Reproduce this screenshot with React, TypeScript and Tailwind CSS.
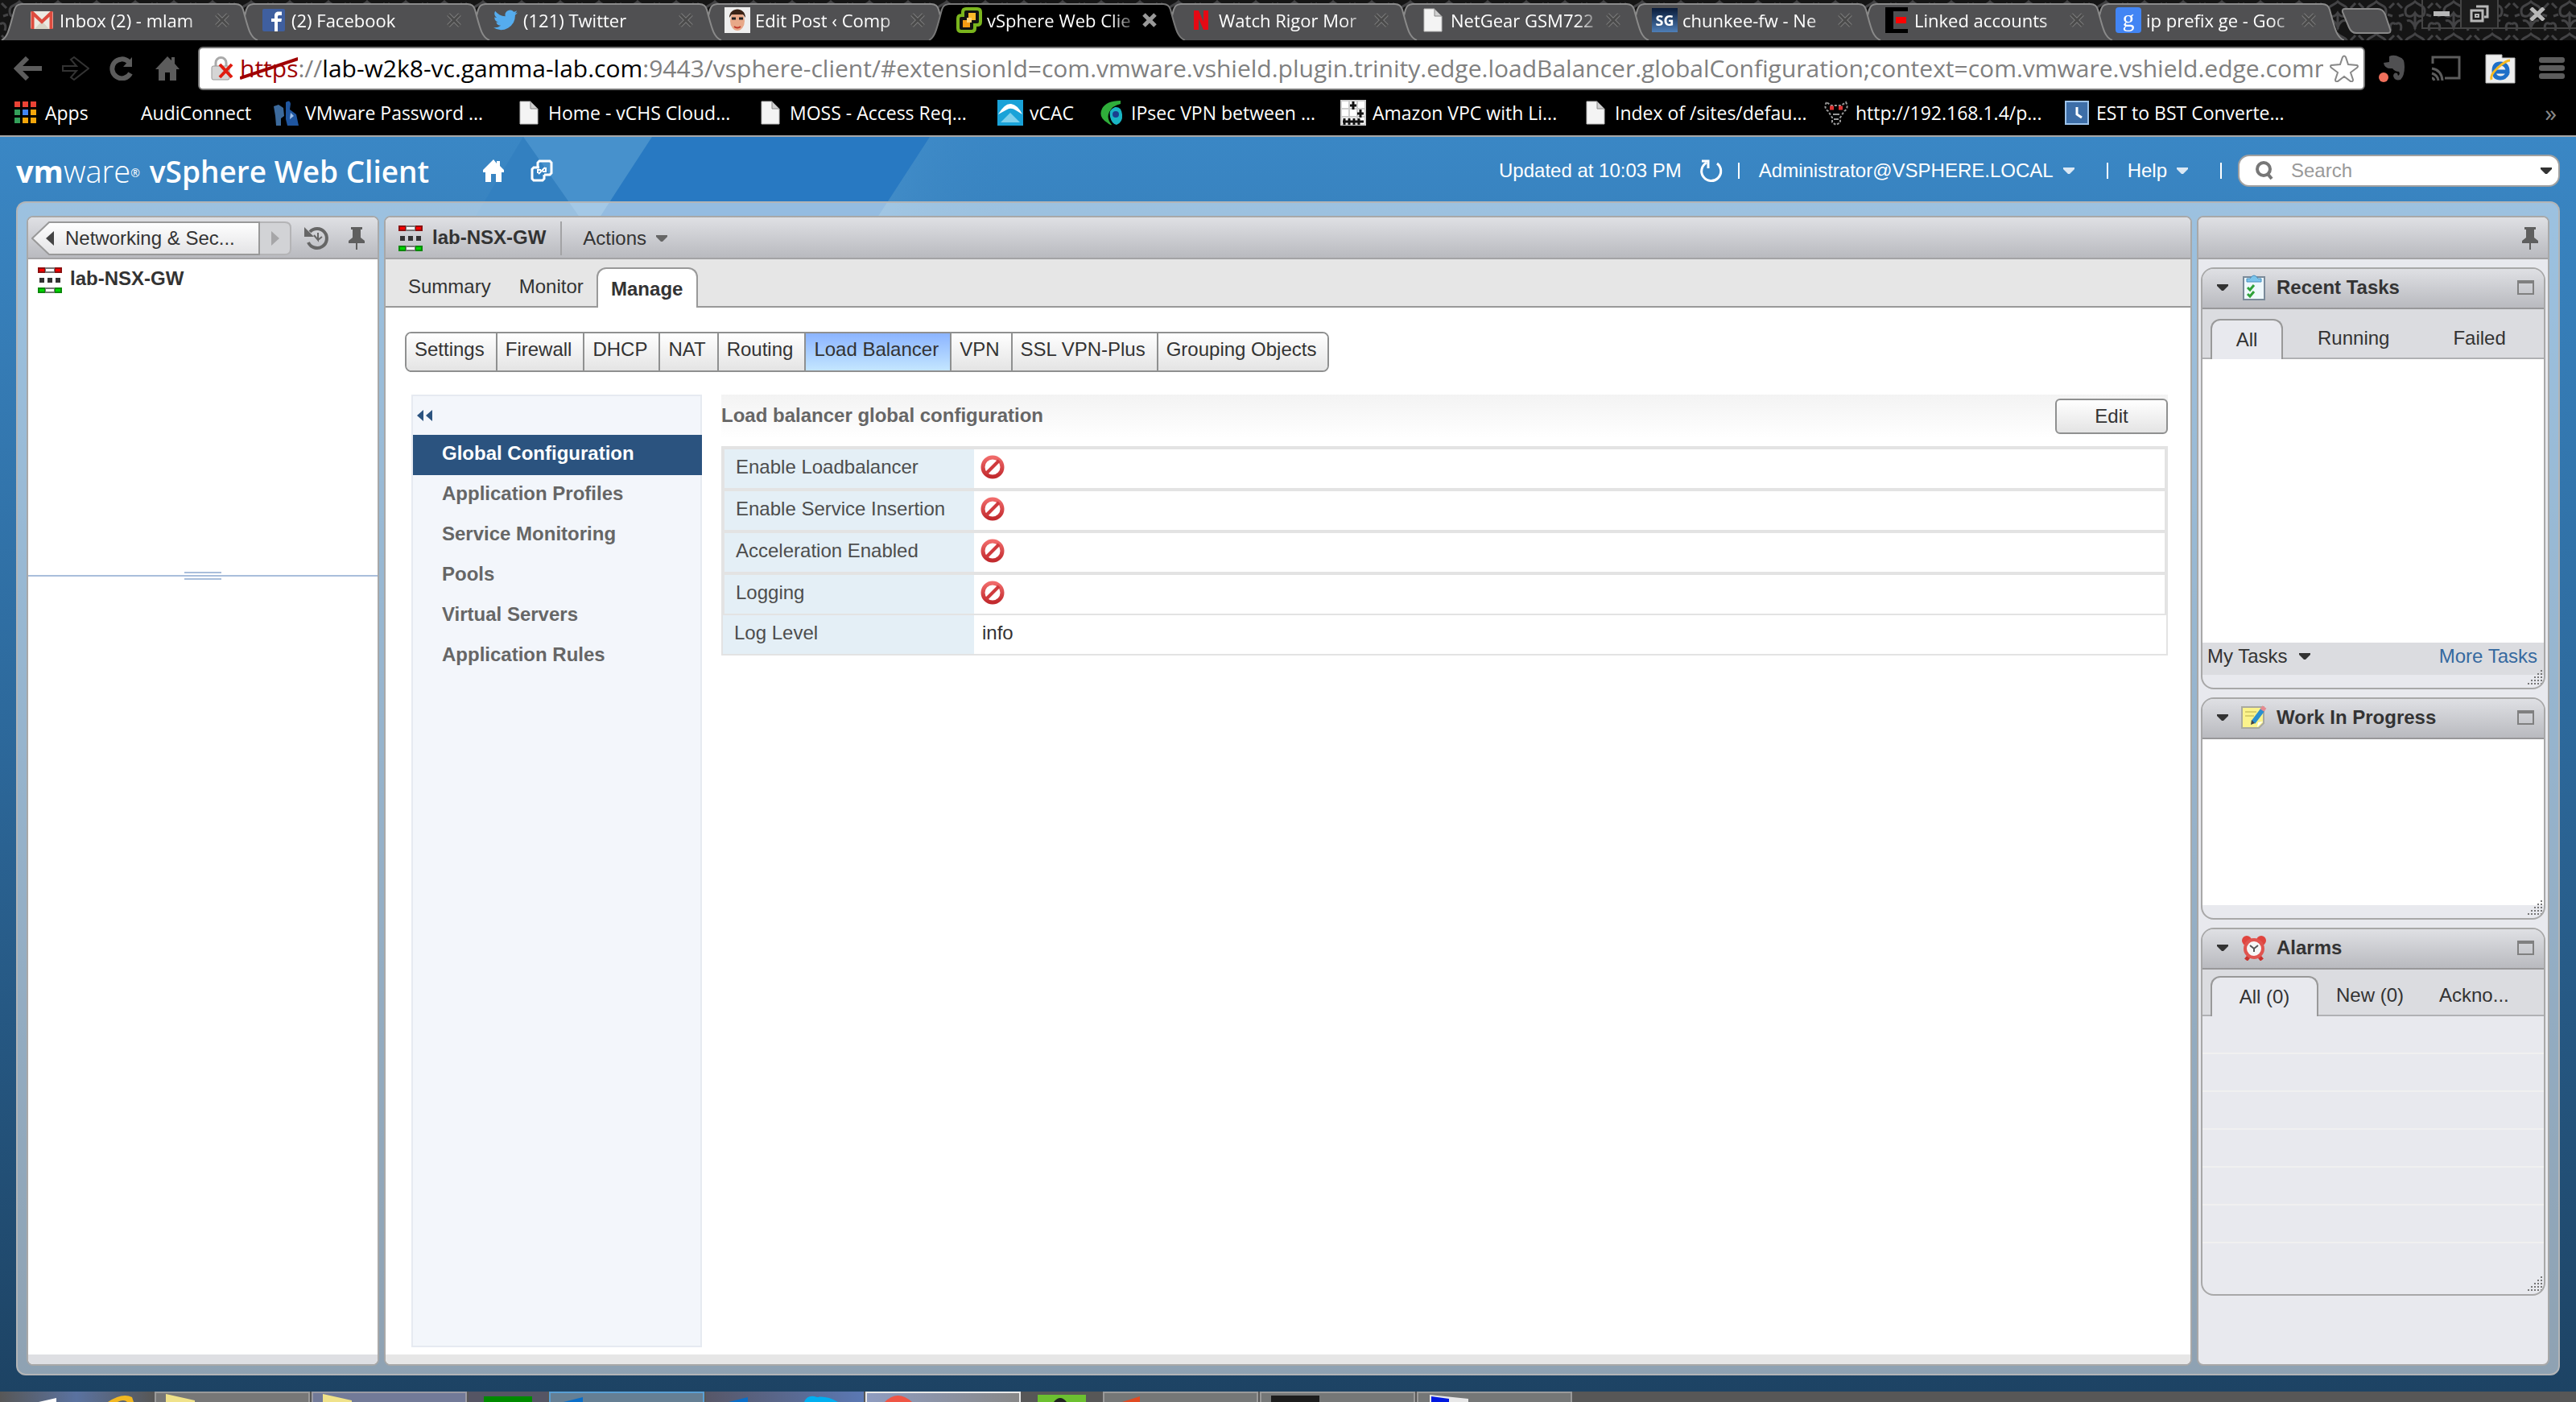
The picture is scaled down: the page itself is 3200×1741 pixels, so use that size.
import React, { useState } from 'react';

/* ---------- small shared icons ---------- */

const Caret: React.FC<{ className?: string }> = ({ className = 'fill-[#333]' }) => (
  <svg width="14" height="8" viewBox="0 0 14 8" className={className} aria-hidden="true">
    <path d="M0 0h14v2L8 8H6L0 2z" />
  </svg>
);

const Pin = () => (
  <svg width="20" height="28" viewBox="0 0 20 28" className="fill-[#5f5f5f]" aria-hidden="true">
    <path d="M3 0h14v3h-2v10l5 4v3H0v-3l5-4V3H3z" />
    <path d="M9 20h2v8H9z" />
  </svg>
);

const EdgeIcon = () => (
  <svg width="30" height="32" viewBox="0 0 30 32" className="shrink-0" aria-hidden="true">
    <rect width="30" height="7" fill="#777" />
    <rect width="9" height="7" fill="#8c1010" />
    <rect x="21" width="9" height="7" fill="#8c1010" />
    <rect x="2" y="2" width="6" height="3" fill="#f00" />
    <rect x="22" y="2" width="6" height="3" fill="#f00" />
    <rect x="10" y="2" width="10" height="3" fill="#fff" />
    <rect x="2" y="13" width="6" height="6" fill="#333" />
    <rect x="12" y="13" width="6" height="6" fill="#333" />
    <rect x="22" y="13" width="6" height="6" fill="#333" />
    <rect y="25" width="30" height="7" fill="#777" />
    <rect y="25" width="9" height="7" fill="#0a8a0a" />
    <rect x="21" y="25" width="9" height="7" fill="#0a8a0a" />
    <rect x="2" y="27" width="6" height="3" fill="#00d800" />
    <rect x="22" y="27" width="6" height="3" fill="#00d800" />
    <rect x="10" y="27" width="10" height="3" fill="#fff" />
  </svg>
);

const Disabled = () => (
  <svg width="30" height="30" viewBox="0 0 30 30" role="img" aria-label="Disabled">
    <defs>
      <linearGradient id="ban" x1="0" y1="0" x2="0" y2="1">
        <stop offset="0" stopColor="#f06a6a" />
        <stop offset="1" stopColor="#c22a2e" />
      </linearGradient>
    </defs>
    <circle cx="15" cy="15" r="12" fill="#fff" stroke="url(#ban)" strokeWidth="5" />
    <path d="M7 23L23 7" stroke="#cf3a3d" strokeWidth="4" />
  </svg>
);

const PageIcon = () => (
  <svg width="24" height="30" viewBox="0 0 24 30" aria-hidden="true">
    <path d="M1 1h13l9 9v19H1z" fill="#f4f4f4" stroke="#bbb" />
    <path d="M14 1v9h9z" fill="#d0d0d0" stroke="#888" />
  </svg>
);

const Grip = () => (
  <svg width="20" height="20" viewBox="0 0 20 20" className="absolute right-0.5 bottom-0.5 fill-[#777]" aria-hidden="true">
    {[0, 1, 2, 3, 4].map((r) =>
      Array.from({ length: r + 1 }, (_, c) => (
        <rect key={`${r}-${c}`} x={18 - c * 4} y={r * 4} width="2" height="2" />
      ))
    )}
  </svg>
);

/* ---------- browser chrome ---------- */

const GmailIcon = () => (
  <svg width="28" height="22" viewBox="0 0 28 22" aria-hidden="true">
    <rect width="28" height="22" rx="2" fill="#eceae2" />
    <path d="M5 22l9-10 9 10z" fill="#d8d4c6" />
    <path d="M2.500 22V2L14 13 25.500 2v20" fill="none" stroke="#dd4b3e" strokeWidth="4" />
  </svg>
);
const FacebookIcon = () => (
  <svg width="28" height="28" viewBox="0 0 28 28" aria-hidden="true">
    <rect width="28" height="28" rx="2" fill="#3f5f9f" />
    <path d="M15 28V16h-4v-4h4V9c0-4 2-5.500 5-5.500h4V8h-3c-1.500 0-2 .5-2 2v2h5l-.6 4H19v12z" fill="#fff" />
  </svg>
);
const TwitterIcon = () => (
  <svg width="30" height="26" viewBox="0 0 24 20" aria-hidden="true">
    <path
      fill="#55acee"
      d="M24 2.400a10 10 0 0 1-2.800.8A5 5 0 0 0 23.300.5a10 10 0 0 1-3.100 1.200 4.900 4.900 0 0 0-8.400 4.500A14 14 0 0 1 1.700 1a4.900 4.900 0 0 0 1.500 6.600A5 5 0 0 1 1 7a4.900 4.900 0 0 0 4 4.900 5 5 0 0 1-2.300 0 4.900 4.900 0 0 0 4.600 3.500A10 10 0 0 1 0 17.400 14 14 0 0 0 21.500 5a10 10 0 0 0 2.500-2.600z"
    />
  </svg>
);
const FaceIcon = () => (
  <svg width="32" height="32" viewBox="0 0 32 32" aria-hidden="true">
    <rect width="32" height="32" fill="#eee" />
    <ellipse cx="16" cy="17" rx="9" ry="12" fill="#e8a888" />
    <path d="M6 13c0-14 20-14 20 0l-3-4H9z" fill="#3a2417" />
    <path d="M9 14h5M18 14h5" stroke="#222" strokeWidth="3" />
    <path d="M12 24q4 3 8 0" stroke="#c0392b" strokeWidth="2" fill="none" />
  </svg>
);
const VsphereIcon = () => (
  <svg width="32" height="32" viewBox="0 0 32 32" aria-hidden="true">
    <path d="M12 2h14q4 0 4 4v12q0 4-4 4h-3v4q0 4-4 4H6q-4 0-4-4V14q0-4 4-4h2V6q0-4 4-4z" fill="#111" stroke="#7ab51d" strokeWidth="4" />
    <rect x="15" y="7" width="9" height="9" fill="#fbb829" />
    <rect x="8" y="16" width="9" height="9" fill="#f59b14" />
    <rect x="13" y="13" width="6" height="6" fill="#fbd27a" />
  </svg>
);
const NetflixIcon = () => (
  <svg width="20" height="24" viewBox="0 0 20 24" aria-hidden="true">
    <path d="M1 0h6l6 14V0h6v24h-6L7 10v14H1z" fill="#e50914" />
  </svg>
);
const SgIcon = () => (
  <span className="flex h-[30px] w-8 items-center justify-center bg-linear-to-b from-[#0a1c3a] to-[#4f7fb8] text-lg font-bold text-white">SG</span>
);
const LinkedIcon = () => (
  <svg width="28" height="32" viewBox="0 0 28 32" aria-hidden="true">
    <path d="M0 0h28v5H10v22h18v5H0z" fill="#000" />
    <rect x="13" y="12" width="13" height="8" fill="#f00" />
  </svg>
);
const GoogleIcon = () => (
  <span className="flex h-8 w-8 items-center justify-center rounded bg-[#4285f4] pb-1 font-['Liberation_Serif',serif] text-3xl leading-none text-white">g</span>
);

const browserTabs = [
  { title: 'Inbox (2) - mlam', icon: GmailIcon },
  { title: '(2) Facebook', icon: FacebookIcon },
  { title: '(121) Twitter', icon: TwitterIcon },
  { title: 'Edit Post ‹ Comp', icon: FaceIcon },
  { title: 'vSphere Web Clie', icon: VsphereIcon, active: true },
  { title: 'Watch Rigor Mor', icon: NetflixIcon },
  { title: 'NetGear GSM722', icon: PageIcon },
  { title: 'chunkee-fw - Ne', icon: SgIcon },
  { title: 'Linked accounts', icon: LinkedIcon },
  { title: 'ip prefix ge - Goc', icon: GoogleIcon },
];

const TabStrip = () => (
  <div className="relative flex h-[50px] overflow-hidden bg-[#151515]">
    <svg className="absolute inset-0 h-full w-full" aria-hidden="true">
      <defs>
        <pattern id="damask" width="48" height="40" patternUnits="userSpaceOnUse">
          <g fill="none" stroke="#434345" strokeWidth="3">
            <path d="M24 2c-6 6-12 4-12 12s8 8 12 2c4 6 12 6 12-2S30 8 24 2z" />
            <path d="M24 18v18M14 26c4-2 8 2 10 8 2-6 6-10 10-8M0 30c6-4 8 2 6 8M48 30c-6-4-8 2-6 8" />
            <path d="M2 4l6 6M46 4l-6 6M4 20l6-2M44 20l-6-2" />
          </g>
        </pattern>
      </defs>
      <rect width="100%" height="100%" fill="url(#damask)" />
    </svg>
    {browserTabs.map(({ title, icon: Icon, active }, i) => (
      <div key={title} className="relative flex w-72 shrink-0 items-center pl-9" style={{ zIndex: active ? 20 : 10 - i }}>
        <svg width="322" height="50" viewBox="0 0 322 50" className="absolute top-0 left-0" aria-hidden="true">
          <path
            d="M2 50C10 46 12 34 18 12Q20 5 27 5H293Q300 5 302 12C308 34 310 46 320 50"
            fill={active ? '#000' : '#505052'}
            stroke={active ? '#777' : '#8a8a8a'}
            strokeWidth="2"
          />
        </svg>
        <a href="#" className="relative flex w-[228px] items-center gap-1.5 mask-r-from-85% text-[22px] leading-8 whitespace-nowrap text-white">
          <span className="flex w-8 shrink-0 justify-center">
            <Icon />
          </span>
          {title}
        </a>
        <button aria-label={`Close ${title}`} className="relative ml-0.5">
          <svg width="20" height="18" viewBox="0 0 20 18" fill="none" aria-hidden="true">
            <path d="M3 2l14 14M17 2L3 16" stroke={active ? '#999' : '#7c7c7c'} strokeWidth="5" />
            {!active && <path d="M3 2l14 14M17 2L3 16" stroke="#4a4a4a" strokeWidth="3" />}
          </svg>
        </button>
      </div>
    ))}
    <button aria-label="New tab" className="relative ml-7 self-start pt-2.5">
      <svg width="64" height="32" viewBox="0 0 64 32" aria-hidden="true">
        <path d="M2 5q-1-4 3-4h41q6 0 9 7l6 18q2 5-3 5H19q-6 0-9-7z" fill="#505052" stroke="#888" strokeWidth="2" />
      </svg>
    </button>
    <div className="relative ml-auto flex h-9 w-[192px] items-center border-b-2 border-[#444] text-[#c8c8c8]">
      <button aria-label="Minimize" className="flex h-full w-12 items-center justify-center border-l-2 border-[#444]">
        <span className="h-1.5 w-5 bg-[#b8b8b8]" />
      </button>
      <button aria-label="Restore" className="flex h-full w-12 items-center justify-center border-x-2 border-[#444] bg-[#1c1c1c]">
        <svg width="24" height="22" viewBox="0 0 24 22" fill="none" stroke="#b8b8b8" strokeWidth="3" aria-hidden="true">
          <path d="M8 2h14v13h-4" />
          <rect x="2" y="7" width="14" height="13" />
          <rect x="7" y="12" width="4" height="3" strokeWidth="2" />
        </svg>
      </button>
      <button aria-label="Close window" className="flex h-full flex-1 items-center justify-center">
        <svg width="20" height="17" viewBox="0 0 20 17" fill="none" stroke="#b8b8b8" strokeWidth="5" aria-hidden="true">
          <path d="M2 1l16 15M18 1L2 16" />
        </svg>
      </button>
    </div>
  </div>
);

const AddressRow = () => (
  <div className="flex h-[66px] items-center bg-black pt-1 pr-3.5 pl-4">
    <div className="flex w-[230px] items-center gap-[25px]">
      <button aria-label="Back">
        <svg width="36" height="30" viewBox="0 0 36 30" fill="none" stroke="#5c5c5c" strokeWidth="6" aria-hidden="true">
          <path d="M5 15h31M18 2L5 15l13 13" />
        </svg>
      </button>
      <button aria-label="Forward">
        <svg width="34" height="30" viewBox="0 0 34 30" fill="none" stroke="#333" strokeWidth="2" aria-hidden="true">
          <path d="M1 12h17l-7-8 4-3 18 14-18 14-4-3 7-8H1z" />
        </svg>
      </button>
      <button aria-label="Reload">
        <svg width="32" height="30" viewBox="0 0 32 30" fill="none" stroke="#5c5c5c" strokeWidth="6" aria-hidden="true">
          <path d="M26 21A12 12 0 1 1 24 7" />
          <path d="M28 1v12H17z" fill="#5c5c5c" stroke="none" />
        </svg>
      </button>
      <button aria-label="Home">
        <svg width="30" height="30" viewBox="0 0 30 30" fill="#5c5c5c" aria-hidden="true">
          <path d="M15 0L0 16h4v14h8V20h6v10h8V16h4l-6-7V1h-4v4z" />
        </svg>
      </button>
    </div>
    <div className="flex h-[54px] min-w-0 flex-1 items-center rounded-md border-2 border-[#777] bg-white pr-1.5 pl-3.5 text-[30px] leading-10">
      <svg width="28" height="32" viewBox="0 0 28 32" className="shrink-0" aria-hidden="true">
        <path d="M6 14V9a6 6 0 0 1 13 0v5" fill="none" stroke="#aaa" strokeWidth="3" />
        <rect x="1" y="13" width="22" height="17" rx="2" fill="#d5d5d5" stroke="#999" />
        <path d="M11 11l15 16M26 11L11 27" stroke="#e01b0f" strokeWidth="4" />
      </svg>
      <label htmlFor="address" className="flex shrink-0 pl-2 text-[#808080]">
        <span className="relative text-[#a00000]">
          https
          <svg viewBox="0 0 70 28" preserveAspectRatio="none" className="absolute inset-x-0 top-1.5 h-7 w-full" aria-hidden="true">
            <path d="M0 26L70 2" stroke="#a00000" strokeWidth="4" />
          </svg>
        </span>
        ://<span className="text-black">lab-w2k8-vc.gamma-lab.com</span>
      </label>
      <input
        id="address"
        readOnly
        className="min-w-0 flex-1 text-[#808080] outline-none"
        value=":9443/vsphere-client/#extensionId=com.vmware.vshield.plugin.trinity.edge.loadBalancer.globalConfiguration;context=com.vmware.vshield.edge.comm"
      />
      <button aria-label="Bookmark this page" className="pl-2">
        <svg width="36" height="34" viewBox="0 0 36 34" fill="#fff" stroke="#888" strokeWidth="2" aria-hidden="true">
          <path d="M16 3q2-3 4 0l3 9 11 1q2 1 0 3l-8 6 3 9q0 3-3 2l-8-6-8 6q-3 1-3-2l3-9-8-6q-2-2 0-3l11-1z" />
        </svg>
      </button>
    </div>
    <div className="flex w-[248px] items-center justify-between pl-4">
      <svg width="36" height="36" viewBox="0 0 36 36" aria-hidden="true">
        <path d="M14 3q6-3 13 1 6 1 6 12t-5 16q-8 2-9-5 1-5 5-3l1 3q3-2 1-5-5 0-8-4-10 1-11-7l7-1z" fill="#505052" />
        <circle cx="7" cy="29" r="6" fill="#f0705c" />
      </svg>
      <svg width="38" height="32" viewBox="0 0 38 32" fill="none" stroke="#5c5c5c" strokeWidth="3" aria-hidden="true">
        <path d="M3 10V2h33v26H18M2 16q12 2 13 15M2 22q7 2 8 9M2 28q2 0 3 3" />
      </svg>
      <svg width="38" height="38" viewBox="0 0 38 38" aria-hidden="true">
        <path d="M1 2h20v4h16v31H1z" fill="#eee" stroke="#bbb" />
        <path d="M28 25q-3 6-9 6-8 0-8-9t8-9q9 0 9 10H13" fill="none" stroke="#1e6fc8" strokeWidth="5" />
        <path d="M8 33q-2-6 8-15T31 9" fill="none" stroke="#f5b921" strokeWidth="3" />
      </svg>
      <button aria-label="Menu">
        <svg width="32" height="30" viewBox="0 0 32 30" fill="#5c5c5c" aria-hidden="true">
          <rect y="1" width="32" height="7" rx="3" />
          <rect y="11" width="32" height="7" rx="3" />
          <rect y="21" width="32" height="7" rx="3" />
        </svg>
      </button>
    </div>
  </div>
);

const AppsIcon = () => (
  <svg width="28" height="28" viewBox="0 0 28 28" aria-hidden="true">
    {['#ea4335', '#ea4335', '#ea4335', '#34a05a', '#4285f4', '#f4a60b', '#34a05a', '#f4a60b', '#f4a60b'].map((c, i) => (
      <rect key={i} x={(i % 3) * 10} y={Math.floor(i / 3) * 10} width="7" height="7" fill={c} />
    ))}
  </svg>
);
const VmwPeopleIcon = () => (
  <svg width="32" height="32" viewBox="0 0 32 32" fill="#1f56a0" aria-hidden="true">
    <path d="M16 3q5-4 6 2l-1 7 8 6 3 14H18l-2-8z" />
    <path d="M1 8l6-2 6 4 1 10-4 3v9H4l-1-12z" fill="#3c6a9c" />
    <path d="M22 16l4 4-5 4z" fill="#9fc0e8" />
  </svg>
);
const VcacIcon = () => (
  <svg width="32" height="32" viewBox="0 0 32 32" aria-hidden="true">
    <rect width="32" height="32" fill="#19a2d8" />
    <path d="M1 18Q9 4 17 5t14 13l-8-5q-6-4-11-1z" fill="#fff" />
    <path d="M4 28l12-12 12 12z" fill="#7fd0ec" />
  </svg>
);
const SwirlIcon = () => (
  <svg width="30" height="32" viewBox="0 0 30 32" aria-hidden="true">
    <path d="M26 1Q8 1 3 11T9 28q5 4 6 3-7-8-3-16T26 5z" fill="#2fae3a" />
    <path d="M19 9q-8 3-6 12t8 10q8-3 7-13T19 9z" fill="#19b5c4" />
    <circle cx="20" cy="18" r="4" fill="#1a3f8f" />
  </svg>
);
const SkullIcon = () => (
  <svg width="32" height="32" viewBox="0 0 32 32" aria-hidden="true">
    <rect width="32" height="32" fill="#ccc" />
    {[0, 1, 2].map((r) => [0, 1, 2].map((c) => <rect key={`${r}${c}`} x={2 + c * 10} y={2 + r * 10} width="8" height="8" fill="#fff" />))}
    <path d="M16 2v10M12 7h8M25 12v10M21 17h8M3 27h26M5 23v8M11 23v8M17 23v8M23 23v8" stroke="#111" strokeWidth="3" />
  </svg>
);
const DevilIcon = () => (
  <svg width="32" height="32" viewBox="0 0 32 32" fill="none" stroke="#999" strokeWidth="2" aria-hidden="true">
    <path d="M4 3Q0 10 6 14l5 8v6l5 3 5-3v-6l5-8q6-4 2-11l-6 4H10z" strokeDasharray="3 2" />
    <path d="M8 10h5M19 10h5" stroke="#d33" strokeWidth="5" />
    <path d="M12 18h8M13 24h6" />
  </svg>
);
const ClockIcon = () => (
  <svg width="30" height="32" viewBox="0 0 30 32" aria-hidden="true">
    <rect x="1" y="2" width="28" height="28" fill="#3d6ea8" stroke="#9cc3ea" strokeWidth="2" />
    <path d="M15 9v9l6 4" fill="none" stroke="#fff" strokeWidth="3" />
  </svg>
);

const bookmarks = [
  { title: 'Apps', icon: AppsIcon, width: 'w-[119px]' },
  { title: 'AudiConnect', icon: null, width: 'w-[204px]' },
  { title: 'VMware Password ...', icon: VmwPeopleIcon, width: 'w-[302px]' },
  { title: 'Home - vCHS Cloud...', icon: PageIcon, width: 'w-[300px]' },
  { title: 'MOSS - Access Req...', icon: PageIcon, width: 'w-[298px]' },
  { title: 'vCAC', icon: VcacIcon, width: 'w-[126px]' },
  { title: 'IPsec VPN between ...', icon: SwirlIcon, width: 'w-[300px]' },
  { title: 'Amazon VPC with Li...', icon: SkullIcon, width: 'w-[301px]' },
  { title: 'Index of /sites/defau...', icon: PageIcon, width: 'w-[299px]' },
  { title: 'http://192.168.1.4/p...', icon: DevilIcon, width: 'w-[299px]' },
  { title: 'EST to BST Converte...', icon: ClockIcon, width: 'w-[300px]' },
];

const BookmarksBar = () => (
  <nav className="flex h-[54px] items-center border-b-2 border-[#a8a8a8] bg-black pb-1 pl-4 text-[23px] leading-8 whitespace-nowrap text-white">
    {bookmarks.map(({ title, icon: Icon, width }) => (
      <a key={title} href="#" className={`flex shrink-0 items-center gap-2 ${width}`}>
        <span className="flex w-8 shrink-0 justify-center">{Icon && <Icon />}</span>
        {title}
      </a>
    ))}
    <button aria-label="More bookmarks" className="mr-6 ml-auto text-3xl leading-8 text-[#888]">»</button>
  </nav>
);

/* ---------- vSphere header ---------- */

const Separator = () => <span className="h-5 w-0.5 bg-white" />;

const AppHeader = () => (
  <header className="relative flex h-20 items-center pt-1 pr-5 pl-5 text-2xl leading-7 text-white">
    <svg width="1500" height="100" viewBox="0 0 1500 100" className="absolute top-0 left-0" aria-hidden="true">
      <defs>
        <linearGradient id="beam" x1="0" x2="1">
          <stop offset="0" stopColor="#4b95cf" stopOpacity=".5" />
          <stop offset="1" stopColor="#3a84c2" stopOpacity="0" />
        </linearGradient>
      </defs>
      <path d="M650 0h160L745 100h-25z" fill="#4791cc" />
      <path d="M650 0L590 100h130z" fill="#3380c0" />
      <path d="M810 0h345l-65 100H745z" fill="#2879c2" />
      <path d="M1155 0h110v100h-175z" fill="url(#beam)" />
    </svg>
    <h1 className="relative flex items-baseline gap-3 font-['Open_Sans',sans-serif] whitespace-nowrap">
      <span className="text-[38px] leading-10">
        <b>vm</b>
        <span className="font-light">ware</span>
        <sup className="text-sm">®</sup>
      </span>
      <span className="text-[37px] leading-10 font-semibold">vSphere Web Client</span>
    </h1>
    <div className="relative ml-[66px] flex items-center gap-8">
      <button aria-label="Home">
        <svg width="28" height="28" viewBox="0 0 28 28" fill="#fff" aria-hidden="true">
          <path d="M14 0L1 13v3h3v12h7V18h6v10h7V16h3v-3l-5-5V2h-4v3z" />
        </svg>
      </button>
      <button aria-label="Open windows">
        <svg width="28" height="28" viewBox="0 0 28 28" fill="none" stroke="#fff" strokeWidth="3" aria-hidden="true">
          <path d="M17 19h7l2-2V4l-2-2H11L9 4v6" />
          <path d="M11 10H4l-2 2v12l2 2h11l2-2v-5" />
          <path d="M9 17v-4h4M19 10v5h-4M10 18l8-8" strokeWidth="2" />
        </svg>
      </button>
    </div>
    <div className="relative ml-auto flex items-center whitespace-nowrap">
      <span>Updated at 10:03 PM</span>
      <button aria-label="Refresh" className="mr-[18px] ml-[22px]">
        <svg width="30" height="30" viewBox="0 0 30 30" fill="none" stroke="#fff" strokeWidth="3" aria-hidden="true">
          <path d="M9 5a12 12 0 1 0 13 1" />
          <path d="M3 3h8v9" />
        </svg>
      </button>
      <Separator />
      <button className="ml-6 flex items-center gap-3">
        Administrator@VSPHERE.LOCAL
        <Caret className="fill-[#dbe8f4]" />
      </button>
      <span className="ml-10 flex">
        <Separator />
      </span>
      <button className="ml-6 flex items-center gap-3">
        Help
        <Caret className="fill-[#dbe8f4]" />
      </button>
      <span className="mr-5 ml-10 flex">
        <Separator />
      </span>
      <label className="flex h-10 w-[400px] items-center rounded-[14px] border-2 border-[#a0a0a0] bg-white pr-2 pl-5">
        <svg width="22" height="24" viewBox="0 0 22 24" fill="none" stroke="#777" strokeWidth="4" aria-hidden="true">
          <circle cx="10" cy="10" r="8" />
          <path d="M15 16l5 6" />
        </svg>
        <input type="search" aria-label="Search" placeholder="Search" className="ml-[22px] min-w-0 flex-1 text-[#333] outline-none placeholder:text-[#999]" />
        <Caret />
      </label>
    </div>
  </header>
);

/* ---------- panels ---------- */

const panel = 'flex flex-col overflow-hidden rounded-lg border-2 border-[#a8a8a8]';
const panelHeader = 'flex h-[52px] shrink-0 items-center border-b-2 border-[#a3a3a5] bg-linear-to-b from-[#dfe0e4] to-[#b9babf] pt-0.5';

const Navigator = () => (
  <aside className={`${panel} w-[438px] shrink-0 bg-white`}>
    <div className={`${panelHeader} pl-1`}>
      <div className="relative flex h-[42px] w-[324px] items-center">
        <svg width="324" height="42" viewBox="0 0 324 42" className="absolute inset-0" aria-hidden="true">
          <defs>
            <linearGradient id="crumb" x1="0" y1="0" x2="0" y2="1">
              <stop offset="0" stopColor="#fff" />
              <stop offset="1" stopColor="#e3e3e5" />
            </linearGradient>
          </defs>
          <path d="M283 1h32q7 0 7 7v26q0 7-7 7h-32z" fill="#d2d3d6" stroke="#b4b4b6" strokeWidth="2" />
          <path d="M283 1H22L1 21l21 20h261z" fill="url(#crumb)" stroke="#999" strokeWidth="2" />
          <path d="M28 12v18l-10-9z" fill="#444" />
          <path d="M298 12v18l10-9z" fill="#a6a6a8" />
        </svg>
        <button className="relative flex-1 pl-[42px] text-left">Networking &amp; Sec...</button>
        <button aria-label="Forward" className="relative h-full w-10" />
      </div>
      <button aria-label="History" className="ml-3.5">
        <svg width="34" height="32" viewBox="0 0 34 32" fill="none" stroke="#666" strokeWidth="4" aria-hidden="true">
          <path d="M8 8a12 12 0 1 1-2 13" />
          <path d="M1 2v12h12z" fill="#666" stroke="none" />
          <path d="M13 12l5 6V9M18 18l5-4" strokeWidth="2" />
        </svg>
      </button>
      <button aria-label="Pin navigator" className="ml-[22px]">
        <Pin />
      </button>
    </div>
    <div className="flex h-[388px] items-start gap-2.5 pt-2.5 pl-3">
      <EdgeIcon />
      <a href="#" className="font-bold">lab-NSX-GW</a>
    </div>
    <div className="flex h-2.5 flex-col items-center justify-between">
      <span className="h-0.5 w-[46px] bg-[#a9bedb]" />
      <span className="h-0.5 w-full bg-[#a9bedb]" />
      <span className="h-0.5 w-[46px] bg-[#a9bedb]" />
    </div>
    <div className="flex-1" />
    <div className="h-3 shrink-0 bg-[#dedfe3]" />
  </aside>
);

const subTabs = ['Settings', 'Firewall', 'DHCP', 'NAT', 'Routing', 'Load Balancer', 'VPN', 'SSL VPN-Plus', 'Grouping Objects'];
const sections = ['Global Configuration', 'Application Profiles', 'Service Monitoring', 'Pools', 'Virtual Servers', 'Application Rules'];
const flags = ['Enable Loadbalancer', 'Enable Service Insertion', 'Acceleration Enabled', 'Logging'];

const Workspace = () => {
  const [subTab, setSubTab] = useState('Load Balancer');
  const [section, setSection] = useState('Global Configuration');

  return (
    <main className={`${panel} min-w-0 flex-1 bg-white`}>
      <div className={`${panelHeader} pl-4`}>
        <EdgeIcon />
        <h2 className="ml-3 pb-0.5 font-bold">lab-NSX-GW</h2>
        <span className="mr-[26px] ml-[18px] h-[42px] w-0.5 bg-[#a3a3a5]" />
        <button className="flex items-center gap-3">
          Actions
          <Caret className="fill-[#666]" />
        </button>
      </div>

      <div className="relative flex h-[60px] shrink-0 items-end bg-[#e6e6e6] pl-7">
        <span className="absolute inset-x-0 bottom-0 h-0.5 bg-[#999]" />
        <button className="pb-3">Summary</button>
        <button className="ml-[35px] pb-3">Monitor</button>
        <button className="relative ml-4 h-[50px] w-[126px] rounded-t-xl border-2 border-b-0 border-[#999] bg-white pt-0.5 font-bold">
          Manage
        </button>
      </div>

      <div className="flex pt-[30px] pl-6">
        <div className="flex h-[50px] overflow-hidden rounded-lg border-2 border-[#8f9090]">
          {subTabs.map((t) => (
            <button
              key={t}
              onClick={() => setSubTab(t)}
              className={`border-r-2 border-[#8f9090] pr-3.5 pb-1.5 pl-2.5 last:border-r-0 ${
                t === subTab ? 'bg-linear-to-b from-[#8cb4ff] to-[#c4e6ff]' : 'bg-linear-to-b from-white to-[#e4e4e4]'
              }`}
            >
              {t}
            </button>
          ))}
        </div>
      </div>

      <div className="flex flex-1 gap-6 pt-7 pr-7 pb-[9px] pl-8">
        <nav className="w-[361px] shrink-0 border-2 border-[#e6eaf1] bg-[#f3f6fb] text-[#666]">
          <button aria-label="Collapse" className="flex h-12 w-full items-center pl-[5px]">
            <svg width="20" height="14" viewBox="0 0 20 14" fill="#2b537f" aria-hidden="true">
              <path d="M8 0v14L0 7zM19 0v14l-8-7z" />
            </svg>
          </button>
          {sections.map((s) => (
            <a
              key={s}
              href="#"
              onClick={() => setSection(s)}
              className={`-mr-0.5 flex h-[50px] items-center pb-1 pl-9 font-bold ${s === section ? 'bg-[#2b537f] text-white' : ''}`}
            >
              {s}
            </a>
          ))}
        </nav>

        <section className="min-w-0 flex-1">
          <div className="flex h-[54px] items-center justify-between bg-linear-to-b from-[#f3f3f3] to-white">
            <h3 className="pb-0.5 font-bold text-[#666]">Load balancer global configuration</h3>
            <button className="h-11 w-[140px] rounded-md border-2 border-[#8f9090] bg-linear-to-b from-white to-[#e4e4e4]">Edit</button>
          </div>
          <table className="mt-2.5 w-full border-separate border-spacing-0 border-2 border-[#e3e3e3]">
            <tbody>
              {flags.map((f) => (
                <tr key={f} className="h-[52px]">
                  <th scope="row" className="w-[312px] border-y-2 border-l-2 border-[#e3e3e3] bg-[#e4eff6] pb-1 pl-3.5 text-left font-normal text-[#4d4d4d]">
                    {f}
                  </th>
                  <td className="border-y-2 border-r-2 border-[#e3e3e3] pb-1 pl-2">
                    <Disabled />
                  </td>
                </tr>
              ))}
              <tr className="h-12">
                <th scope="row" className="bg-[#e4eff6] pb-1 pl-3.5 text-left font-normal text-[#4d4d4d]">Log Level</th>
                <td className="pb-1 pl-2.5">info</td>
              </tr>
            </tbody>
          </table>
        </section>
      </div>
      <div className="h-3 shrink-0 bg-[#e6e6e6]" />
    </main>
  );
};

/* ---------- right column ---------- */

const TasksIcon = () => (
  <svg width="28" height="32" viewBox="0 0 28 32" aria-hidden="true">
    <rect x="1" y="3" width="26" height="28" fill="#eef8fc" stroke="#7a8a99" strokeWidth="2" />
    <path d="M5 9V5h4q5-8 10 0h4v4z" fill="#7cc4ea" stroke="#4a90c0" />
    <path d="M6 16l3 3 5-6M6 24l3 3 5-6" fill="none" stroke="#2fa23a" strokeWidth="3" />
  </svg>
);
const NotesIcon = () => (
  <svg width="32" height="30" viewBox="0 0 32 30" aria-hidden="true">
    <path d="M1 2h27v20l-6 6H1z" fill="#fbf38c" stroke="#a9a9a0" strokeWidth="2" />
    <path d="M5 8h14M5 13h11" stroke="#d9cf6a" strokeWidth="2" />
    <path d="M20 27l1-6 6-1z" fill="#fff" />
    <path d="M15 21L27 5" stroke="#2a8fd0" strokeWidth="6" />
    <path d="M26 6l3-4" stroke="#e58a90" strokeWidth="6" />
    <path d="M12 24l1-6 4 4z" fill="#444" />
  </svg>
);
const AlarmIcon = () => (
  <svg width="32" height="32" viewBox="0 0 32 32" aria-hidden="true">
    <circle cx="7" cy="7" r="6" fill="#e0443e" />
    <circle cx="25" cy="7" r="6" fill="#e0443e" />
    <path d="M6 31l5-6M26 31l-5-6" stroke="#c8322e" strokeWidth="5" />
    <circle cx="16" cy="17" r="11" fill="#f6f6f6" stroke="#e0544f" strokeWidth="4" />
    <path d="M11 13l5 4 5-4M16 17v4" fill="none" stroke="#555" strokeWidth="2" />
  </svg>
);

const Portlet: React.FC<{ title: string; icon: React.ReactNode; height: string; children: React.ReactNode }> = ({ title, icon, height, children }) => (
  <section className={`relative flex flex-col overflow-hidden rounded-2xl border-2 border-[#a8a8a8] bg-[#e8e9ee] ${height}`}>
    <header className="flex h-[50px] shrink-0 items-center border-b-2 border-[#98989a] bg-linear-to-b from-[#dfe0e4] to-[#b9babf] pr-3 pb-0.5 pl-[18px]">
      <button aria-label={`Collapse ${title}`}>
        <Caret />
      </button>
      <span className="mr-3 ml-4 flex w-8 justify-center">{icon}</span>
      <h2 className="font-bold">{title}</h2>
      <button aria-label={`Maximize ${title}`} className="ml-auto h-[18px] w-[21px] border-2 border-t-4 border-[#808080]" />
    </header>
    {children}
    <Grip />
  </section>
);

const tabRow = 'relative flex shrink-0 items-end bg-[#dbdce0] pl-2.5';
const selectedTab = 'relative rounded-t-xl border-2 border-b-0 border-[#999] bg-[#e8e9ee]';

const RightColumn = () => (
  <aside className={`${panel} w-[438px] shrink-0 bg-[#e8e9ee]`}>
    <div className={`${panelHeader} justify-end pr-3`}>
      <button aria-label="Pin panel">
        <Pin />
      </button>
    </div>
    <div className="flex flex-col gap-2.5 px-[3px] pt-2.5">
      <Portlet title="Recent Tasks" icon={<TasksIcon />} height="h-[524px]">
        <div className={`${tabRow} h-[62px]`}>
          <span className="absolute inset-x-0 bottom-0 h-0.5 bg-[#b0b1b4]" />
          <button className={`${selectedTab} h-[50px] w-[90px]`}>All</button>
          <button className="ml-[43px] pb-3">Running</button>
          <button className="ml-[79px] pb-3">Failed</button>
        </div>
        <div className="flex-1 bg-white" />
        <div className="flex h-10 items-center justify-between bg-[#dbdce0] pr-2 pb-1.5 pl-1.5">
          <button className="flex items-center gap-3.5">
            My Tasks
            <Caret />
          </button>
          <a href="#" className="text-[#36699f]">More Tasks</a>
        </div>
        <div className="h-4 shrink-0" />
      </Portlet>

      <Portlet title="Work In Progress" icon={<NotesIcon />} height="h-[276px]">
        <div className="flex-1 bg-white" />
        <div className="h-4 shrink-0" />
      </Portlet>

      <Portlet title="Alarms" icon={<AlarmIcon />} height="h-[457px]">
        <div className={`${tabRow} h-[58px]`}>
          <span className="absolute inset-x-0 bottom-0 h-0.5 bg-[#b0b1b4]" />
          <button className={`${selectedTab} h-[50px] w-[134px]`}>All (0)</button>
          <button className="ml-[22px] pb-3">New (0)</button>
          <button className="ml-11 pb-3">Ackno...</button>
        </div>
        {[0, 1, 2, 3, 4, 5].map((r) => (
          <div key={r} className="h-[47px] shrink-0 border-b-2 border-[#f0f0f0]" />
        ))}
      </Portlet>
    </div>
  </aside>
);

/* ---------- OS task bar, only its top edge shows ---------- */

const FolderTop = () => <svg width="40" height="10" viewBox="0 0 40 10" aria-hidden="true"><path d="M0 0l36 8v2H0z" fill="#f0e28a" /></svg>;
const BlueTop = () => <svg width="30" height="6" viewBox="0 0 30 6" aria-hidden="true"><path d="M28 0v6H4z" fill="#0a6ec8" /></svg>;

const taskItem = 'flex h-full w-[193px] shrink-0 items-end border-2 border-b-0 pl-3';

const Taskbar = () => (
  <footer className="flex h-[13px] shrink-0 items-end gap-0.5 overflow-hidden bg-[#575757]">
    <div className="flex h-full w-[190px] shrink-0 items-end bg-linear-to-r from-[#575757] via-[#5a72a0] to-[#575757] pl-12">
      <svg width="120" height="10" viewBox="0 0 120 10" aria-hidden="true">
        <path d="M0 10L22 5v5z" fill="#fff" />
        <path d="M86 10q18-12 30-6l2 6h-8q-4-4-12 0z" fill="#f2b822" />
      </svg>
    </div>
    <div className={`${taskItem} border-[#9a9a9a] bg-[#777]`}><FolderTop /></div>
    <div className={`${taskItem} border-[#9a9aa4] bg-[#727a98]`}><FolderTop /></div>
    <div className="flex h-full w-[98px] shrink-0 items-end justify-center bg-[#555564]">
      <span className="h-[7px] w-[60px] bg-[#008a00]" />
    </div>
    <div className={`${taskItem} border-[#5a9fd4] bg-[#657f94]`}><BlueTop /></div>
    <div className="flex h-full w-[196px] shrink-0 items-end justify-between bg-linear-to-r from-[#575768] to-[#5a78b4] pr-8 pl-6">
      <BlueTop />
      <svg width="42" height="8" viewBox="0 0 42 8" aria-hidden="true"><path d="M0 8q4-10 16-6 12-2 26 6z" fill="#00aff0" /></svg>
    </div>
    <div className={`${taskItem} border-[#e8e8e8] bg-linear-to-r from-[#8f9cc0] to-[#888]`}>
      <svg width="60" height="8" viewBox="0 0 60 8" aria-hidden="true"><path d="M10 8q16-16 34 0z" fill="#ef5545" /></svg>
    </div>
    <div className="flex h-full w-[98px] shrink-0 items-end justify-center">
      <svg width="60" height="9" viewBox="0 0 60 9" aria-hidden="true">
        <rect width="60" height="9" fill="#6cc030" />
        <path d="M20 9q8-10 16 0z" fill="#222" />
      </svg>
    </div>
    <div className={`${taskItem} border-[#9a9a9a] bg-[#757777]`}>
      <svg width="36" height="7" viewBox="0 0 36 7" aria-hidden="true"><path d="M10 7L32 0v7z" fill="#e04a22" /></svg>
    </div>
    <div className={`${taskItem} border-[#9a9a9a] bg-[#757777]`}><span className="h-2 w-[60px] bg-[#1c1c1c]" /></div>
    <div className={`${taskItem} border-[#9a9a9a] bg-[#757777]`}>
      <svg width="54" height="9" viewBox="0 0 54 9" aria-hidden="true">
        <path d="M2 0l48 5v4H2z" fill="#e8e8e8" />
        <path d="M4 2l22 3v4H4z" fill="#0018e0" />
      </svg>
    </div>
  </footer>
);

const App: React.FC = () => (
  <div className="flex min-h-screen flex-col font-['Liberation_Sans',Arial,sans-serif] text-2xl leading-7 text-[#333]">
    <div className="font-['Open_Sans',sans-serif]">
      <TabStrip />
      <AddressRow />
      <BookmarksBar />
    </div>
    <div className="flex flex-1 flex-col bg-linear-to-b from-[#3a87c5] via-[#2c6799] to-[#1d4364] px-5 pb-5">
      <div className="-mx-5">
        <AppHeader />
      </div>
      <div className="relative flex flex-1 gap-1.5 rounded-xl border-2 border-[#b3b5b7] bg-white/50 px-[11px] pt-4 pb-2.5">
        <Navigator />
        <Workspace />
        <RightColumn />
      </div>
    </div>
    <Taskbar />
  </div>
);

export default App;
